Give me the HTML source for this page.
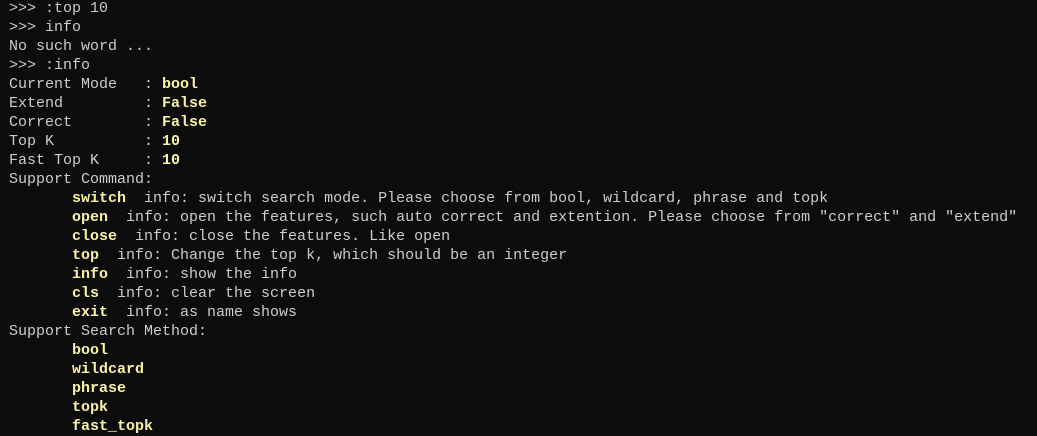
<!DOCTYPE html>
<html><head><meta charset="utf-8"><style>
html,body{margin:0;padding:0;background:#0c0c0c;width:1037px;height:436px;overflow:hidden}
pre{margin:0;position:absolute;left:9px;top:-1px;font-family:"Liberation Mono",monospace;font-size:15px;line-height:19px;color:#cccccc;white-space:pre}
b{color:#f9f1a5;font-weight:bold}
</style></head><body><pre>&gt;&gt;&gt; :top 10
&gt;&gt;&gt; info
No such word ...
&gt;&gt;&gt; :info
Current Mode   : <b>bool</b>
Extend         : <b>False</b>
Correct        : <b>False</b>
Top K          : <b>10</b>
Fast Top K     : <b>10</b>
Support Command:
       <b>switch</b>  info: switch search mode. Please choose from bool, wildcard, phrase and topk
       <b>open</b>  info: open the features, such auto correct and extention. Please choose from "correct" and "extend"
       <b>close</b>  info: close the features. Like open
       <b>top</b>  info: Change the top k, which should be an integer
       <b>info</b>  info: show the info
       <b>cls</b>  info: clear the screen
       <b>exit</b>  info: as name shows
Support Search Method:
       <b>bool</b>
       <b>wildcard</b>
       <b>phrase</b>
       <b>topk</b>
       <b>fast_topk</b></pre></body></html>
